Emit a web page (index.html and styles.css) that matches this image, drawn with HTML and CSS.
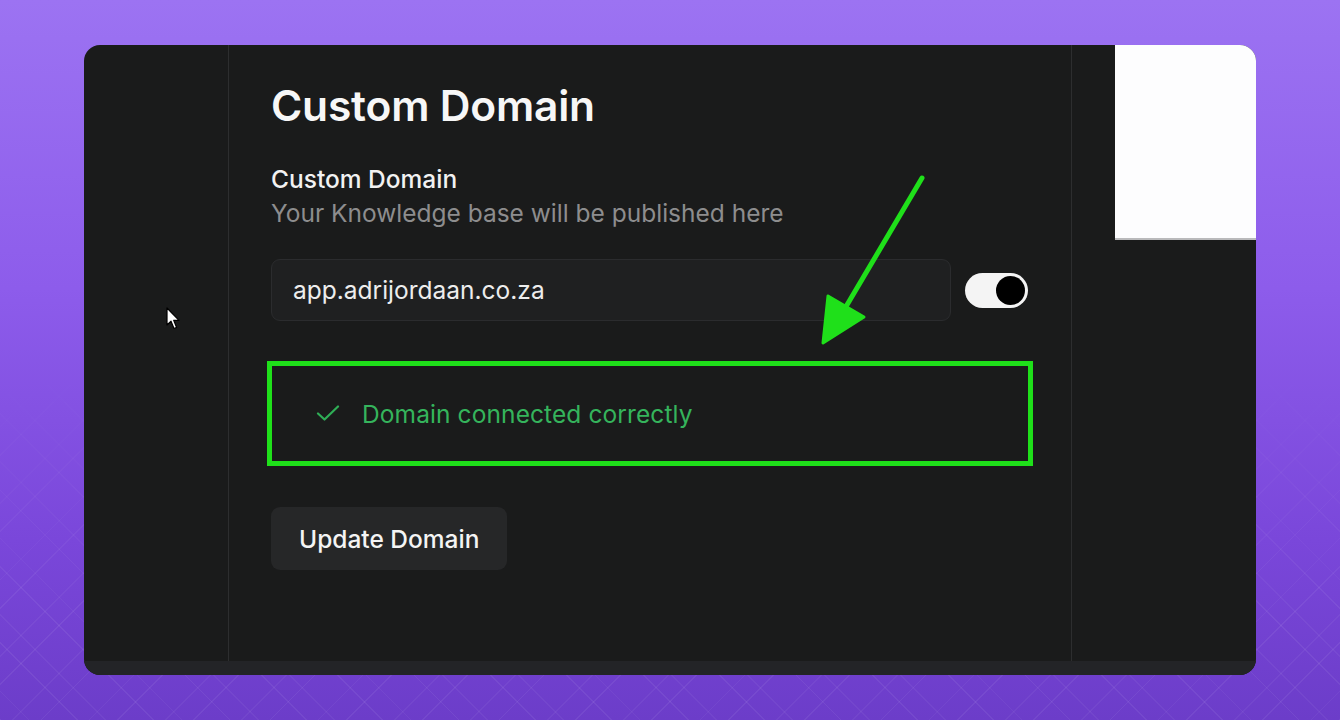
FILE: index.html
```html
<!DOCTYPE html>
<html lang="en">
<head>
<meta charset="utf-8">
<title>Custom Domain</title>
<link rel="stylesheet" href="styles.css">
</head>
<body>
<div class="backdrop"></div>
<main class="card">
  <div class="card-body">
    <aside class="sidebar"></aside>
    <section class="content">
      <h1 class="title">Custom Domain</h1>
      <div class="field-head">
        <div class="field-label">Custom Domain</div>
        <div class="field-help">Your Knowledge base will be published here</div>
      </div>
      <div class="field-row">
        <div class="input">app.adrijordaan.co.za</div>
        <div class="toggle"><span class="knob"></span></div>
      </div>
      <div class="status">
        <svg class="check" viewBox="0 0 24 16" width="24" height="16" aria-hidden="true">
          <path d="M2 8.5 L8.5 14.5 L22 1.5" fill="none" stroke="#2fae56" stroke-width="2.2" stroke-linecap="round" stroke-linejoin="round"/>
        </svg>
        <span class="status-text">Domain connected correctly</span>
      </div>
      <button class="btn" type="button">Update Domain</button>
    </section>
    <aside class="preview">
      <div class="preview-sheet"></div>
    </aside>
  </div>
  <div class="card-foot"></div>
</main>

<svg class="annot-arrow" viewBox="0 0 240 200" width="240" height="200" aria-hidden="true">
  <line x1="122" y1="18" x2="44" y2="150" stroke="#1fe01a" stroke-width="5" stroke-linecap="round"/>
  <polygon points="23,183 28,136 64,157" fill="#1fe01a" stroke="#1fe01a" stroke-width="3" stroke-linejoin="round"/>
</svg>

<svg class="cursor" viewBox="0 0 14 24" width="14" height="24" aria-hidden="true">
  <path d="M1 1 L1 18 L5 14.2 L8 21.5 L10.6 20.4 L7.7 13.3 L13 13.3 Z" fill="#ffffff" stroke="#000000" stroke-width="1.2" stroke-linejoin="round"/>
</svg>
</body>
</html>
```

FILE: styles.css
```css
* { box-sizing: border-box; }

html, body {
  margin: 0;
  padding: 0;
}

body {
  width: 1340px;
  height: 720px;
  overflow: hidden;
  position: relative;
  display: flex;
  align-items: center;
  justify-content: center;
  font-family: "Inter", "Noto Sans", "Liberation Sans", sans-serif;
  background: linear-gradient(180deg, #9c73f2 0%, #8d5ceb 40%, #7a47da 75%, #6c3dc9 100%);
}

.backdrop {
  position: absolute;
  inset: 0;
  background:
    repeating-linear-gradient(45deg, rgba(255,255,255,0.06) 0 1.2px, transparent 1.2px 54px),
    repeating-linear-gradient(-45deg, rgba(255,255,255,0.06) 0 1.2px, transparent 1.2px 54px),
    repeating-linear-gradient(45deg, transparent 0 20px, rgba(255,255,255,0.045) 20px 21.2px, transparent 21.2px 54px),
    repeating-linear-gradient(-45deg, transparent 0 20px, rgba(255,255,255,0.045) 20px 21.2px, transparent 21.2px 54px);
  -webkit-mask-image: linear-gradient(180deg, transparent 0%, transparent 50%, #000 85%, #000 100%);
  mask-image: linear-gradient(180deg, transparent 0%, transparent 50%, #000 85%, #000 100%);
}

.card {
  position: relative;
  width: 1172px;
  height: 630px;
  border-radius: 16px;
  overflow: hidden;
  background: #1a1b1b;
  display: flex;
  flex-direction: column;
}

.card-body {
  flex: 1;
  display: flex;
}

.card-foot {
  height: 14px;
  background: #232427;
}

.sidebar {
  width: 145px;
  border-right: 1px solid #2d2e2f;
}

.content {
  width: 843px;
  border-right: 1px solid #2d2e2f;
  padding: 36px 0 0 42px;
  display: flex;
  flex-direction: column;
  align-items: flex-start;
}

.preview {
  flex: 1;
  display: flex;
  justify-content: flex-end;
  align-items: flex-start;
}

.preview-sheet {
  width: 141px;
  height: 195px;
  background: #fdfdfe;
  border-bottom: 2px solid #b9b9bb;
}

.title {
  margin: 0;
  font-size: 42.5px;
  line-height: 50px;
  font-weight: 600;
  color: #f7f7f7;
  letter-spacing: -0.2px;
}

.field-head {
  margin-top: 31px;
}

.field-label {
  font-size: 24.5px;
  line-height: 34px;
  font-weight: 500;
  color: #f2f2f2;
}

.field-help {
  margin-top: 2px;
  font-size: 24.5px;
  line-height: 30px;
  font-weight: 400;
  color: #8d8d8e;
}

.field-row {
  margin-top: 31px;
  display: flex;
  align-items: center;
  gap: 14px;
}

.input {
  width: 680px;
  height: 62px;
  display: flex;
  align-items: center;
  padding: 0 21px;
  background: #1f2021;
  border: 1px solid #2b2c2e;
  border-radius: 9px;
  font-size: 24.5px;
  color: #ededed;
}

.toggle {
  width: 63px;
  height: 35px;
  border-radius: 18px;
  background: #f4f4f4;
  display: flex;
  align-items: center;
  justify-content: flex-end;
  padding-right: 3px;
}

.knob {
  width: 29px;
  height: 29px;
  border-radius: 50%;
  background: #000;
}

.status {
  margin-top: 40px;
  margin-left: -4px;
  width: 766px;
  height: 105px;
  border: 5px solid #1fe01a;
  display: flex;
  align-items: center;
  gap: 22px;
  padding-left: 44px;
}

.check {
  display: block;
  margin-top: -2px;
}

.status-text {
  font-size: 24.5px;
  color: #35b45c;
  letter-spacing: 0.1px;
}

.btn {
  margin-top: 41px;
  height: 63px;
  padding: 0 28px;
  border: 0;
  border-radius: 9px;
  background: #262728;
  font-family: inherit;
  font-size: 24.5px;
  font-weight: 500;
  color: #f4f4f4;
}

.annot-arrow {
  position: absolute;
  left: 800px;
  top: 160px;
}

.cursor {
  position: absolute;
  left: 166px;
  top: 307px;
}
```
